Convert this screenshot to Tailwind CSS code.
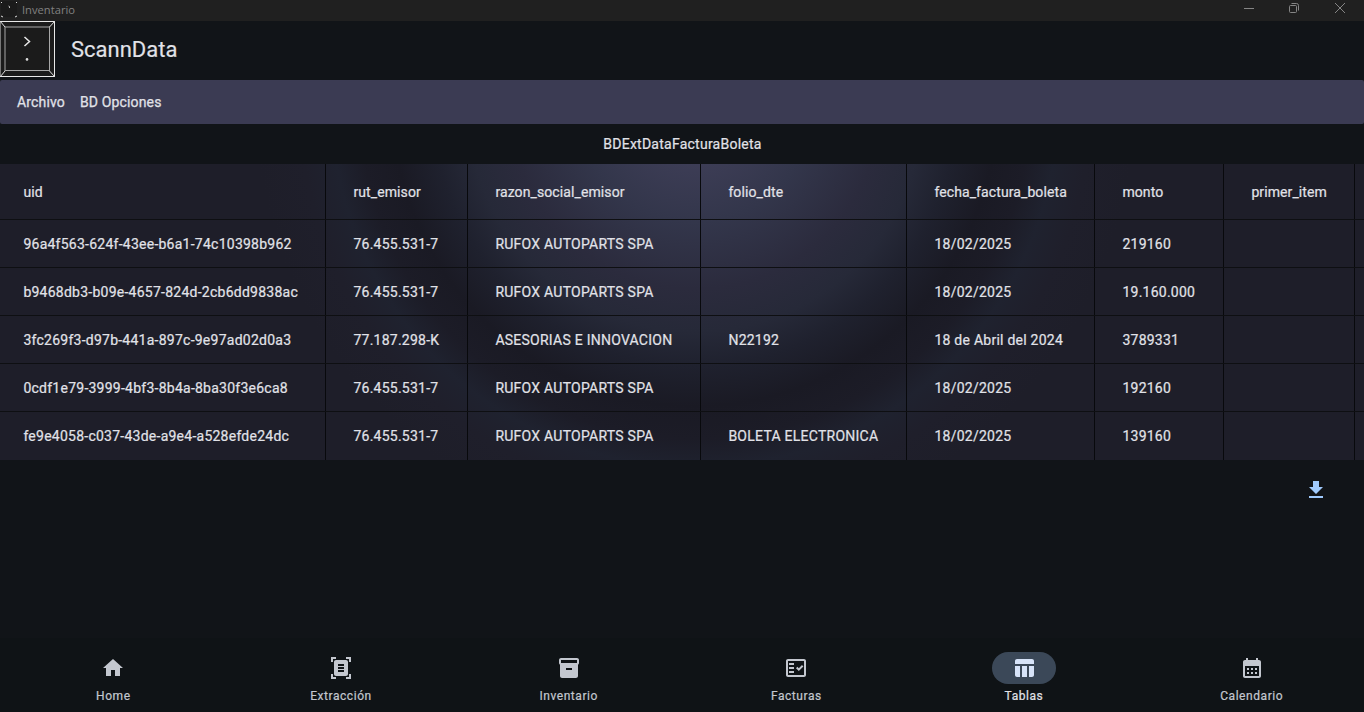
<!DOCTYPE html>
<html lang="es">
<head>
<meta charset="utf-8">
<title>Inventario</title>
<script src="https://cdn.jsdelivr.net/npm/@tailwindcss/browser@4"></script>
</head>
<body class="w-[1364px] h-[712px] overflow-hidden flex flex-col bg-[#111418] text-[#e1e2e8] font-['Roboto',sans-serif] text-sm">
<header class="h-[21px] shrink-0 bg-[#202020] flex items-center text-[#808080]">
  <svg class="w-[18px] h-[18px] mb-1" viewBox="0 0 18 18" fill="none"><path d="M1 1h16v16H1z" fill="#1b1b1b"/><path d="M1 3l1-1M16 2l1 1M1 16l2 1M15 17l2-1" stroke="#ddd"/><path d="M8.500 6l1.500 1-1 1" stroke="#ddd" stroke-width=".8"/></svg>
  <span class="ml-1 leading-5 font-['Open_Sans',sans-serif] text-[11.2px] -mt-0.5">Inventario</span>
  <svg class="ml-auto w-[129px] h-[21px]" viewBox="0 0 129 21" fill="none" stroke="#858585"><path d="M9 8.500h10"/><rect x="54.500" y="5.500" width="7" height="7" rx="1"/><path d="M56.500 3.500h5q2 0 2 2v5"/><path d="M100 3l10 10M110 3l-10 10"/></svg>
</header>
<div class="h-[59px] shrink-0 flex items-start">
  <svg class="w-[55px] h-[56px]" viewBox="0 0 55 56" fill="none"><path d="M0 0h55v56H0z" fill="#1b1b1b"/><path d="M0 .5h54.500v55H0" stroke="#e8e8e8"/><path d="M.5 1v54" stroke="#777"/><rect x="5" y="6" width="44.500" height="43.500" stroke="#a8a8a8"/><path d="M0 0l5 6M55 0l-5.500 6M0 56l5-6M55 56l-5.500-6" stroke="#e0e0e0"/><path d="M24.500 16l5 4.500-5 4.500" stroke="#e8e8e8" stroke-width="1.500"/><circle cx="27" cy="38.400" r="1.300" fill="#ddd"/></svg>
  <h1 class="ml-4 mt-[15px] text-[22px] leading-7 [-webkit-text-stroke:0.15px]">ScannData</h1>
</div>
<nav class="h-11 shrink-0 rounded-[2px] bg-[#3b3b53] flex items-center gap-[15px] px-[17px] tracking-[0.15px] [-webkit-text-stroke:0.25px]"><span>Archivo</span><span>BD Opciones</span></nav>
<h2 class="h-10 shrink-0 flex items-center justify-center tracking-[0.25px] pl-px [-webkit-text-stroke:0.2px]">BDExtDataFacturaBoleta</h2>
<main class="h-[296px] shrink-0 bg-[radial-gradient(circle_at_695px_-60px,#3e3e57_50px,#33364b_118px,#2b2b3d_185px,#262938_228px,#1f212e_262px,#1a1a24_302px,#1c1c27_335px,#1f222f_363px,#1f1f2b_395px,#1e1e29_440px)]">
  <table class="table-fixed w-[1364px] border-collapse text-left [-webkit-text-stroke:0.2px]">
    <colgroup><col class="w-[326px]"><col class="w-[142px]"><col class="w-[233px]"><col class="w-[206px]"><col class="w-[188px]"><col class="w-[129px]"><col class="w-[131px]"><col></colgroup>
    <tbody id="rows"></tbody>
  </table>
</main>
<section class="flex-1 flex justify-end pr-[36.5px] pt-[18px]">
  <svg class="size-6" viewBox="0 0 24 24" fill="#a0cafd"><path d="M19 9h-4V3H9v6H5l7 7 7-7zM5 18v2h14v-2H5z"/></svg>
</section>
<footer class="h-[74px] shrink-0 grid grid-cols-6 bg-[#0f1316] text-xs tracking-[0.56px] text-[#c3c7cf] fill-[#c3c7cf] pt-3.5 -ml-[0.5px] -mr-[1.5px] [-webkit-text-stroke:0.2px]">
  <div class="flex flex-col items-center"><span class="h-8 w-16 flex items-center justify-center"><svg class="size-6 stroke-0" viewBox="0 0 24 24"><path d="M10 20v-6h4v6h5v-8h3L12 3 2 12h3v8z"/></svg></span><span class="mt-1">Home</span></div>
  <div class="flex flex-col items-center"><span class="h-8 w-16 flex items-center justify-center"><svg class="size-6" viewBox="0 0 24 24"><path fill-rule="evenodd" d="M7 3H4v3H2V1h5v2zM22 6V1h-5v2h3v3h2zM7 21H4v-3H2v5h5v-2zM20 18v3h-3v2h5v-5h-2zM19 18c0 1.100-.9 2-2 2H7c-1.100 0-2-.9-2-2V6c0-1.100.9-2 2-2h10c1.100 0 2 .9 2 2v12zM15 8H9v2h6V8zM15 11H9v2h6v-2zM15 14H9v2h6v-2z"/></svg></span><span class="mt-1">Extracción</span></div>
  <div class="flex flex-col items-center"><span class="h-8 w-16 flex items-center justify-center"><svg class="size-6" viewBox="0 0 24 24"><path d="M20 2H4c-1 0-2 .9-2 2v3.010c0 .72.43 1.340 1 1.690V20c0 1.100 1.100 2 2 2h14c.9 0 2-.9 2-2V8.700c.57-.35 1-.97 1-1.690V4c0-1.100-1-2-2-2zm-5 12H9v-2h6v2zm5-7H4V4l16-.02V7z"/></svg></span><span class="mt-1">Inventario</span></div>
  <div class="flex flex-col items-center"><span class="h-8 w-16 flex items-center justify-center"><svg class="size-6" viewBox="0 0 24 24"><path fill-rule="evenodd" d="M20 3H4c-1.100 0-2 .9-2 2v14c0 1.100.9 2 2 2h16c1.100 0 2-.9 2-2V5c0-1.100-.9-2-2-2zm0 16H4V5h16v14z"/><path d="M19.410 10.420 17.990 9l-3.170 3.170-1.410-1.420L12 12.160 14.820 15zM5 7h5v2H5zM5 11h5v2H5zM5 15h5v2H5z"/></svg></span><span class="mt-1">Facturas</span></div>
  <div class="flex flex-col items-center text-[#e1e2e8]"><span class="h-8 w-16 rounded-full bg-[#3b4858] flex items-center justify-center"><svg class="size-6 fill-[#d7e3f8]" viewBox="0 0 24 24"><path d="M10 10.020h5V21h-5zM17 21h3c1.100 0 2-.9 2-2v-9h-5v11zm3-18H5c-1.100 0-2 .9-2 2v3h19V5c0-1.100-.9-2-2-2zM3 19c0 1.100.9 2 2 2h3V10H3v9z"/></svg></span><span class="mt-1">Tablas</span></div>
  <div class="flex flex-col items-center"><span class="h-8 w-16 flex items-center justify-center"><svg class="size-6" viewBox="0 0 24 24"><path d="M19 4h-1V2h-2v2H8V2H6v2H5c-1.110 0-1.990.9-1.990 2L3 20c0 1.100.89 2 2 2h14c1.100 0 2-.9 2-2V6c0-1.100-.9-2-2-2zm0 16H5V10h14v10zM9 14H7v-2h2v2zm4 0h-2v-2h2v2zm4 0h-2v-2h2v2zm-8 4H7v-2h2v2zm4 0h-2v-2h2v2zm4 0h-2v-2h2v2z"/></svg></span><span class="mt-1">Calendario</span></div>
</footer>
<script>
const rows = [
  ['uid','rut_emisor','razon_social_emisor','folio_dte','fecha_factura_boleta','monto','primer_item',''],
  ['96a4f563-624f-43ee-b6a1-74c10398b962','76.455.531-7','RUFOX AUTOPARTS SPA','','18/02/2025','219160','',''],
  ['b9468db3-b09e-4657-824d-2cb6dd9838ac','76.455.531-7','RUFOX AUTOPARTS SPA','','18/02/2025','19.160.000','',''],
  ['3fc269f3-d97b-441a-897c-9e97ad02d0a3','77.187.298-K','ASESORIAS E INNOVACION','N22192','18 de Abril del 2024','3789331','',''],
  ['0cdf1e79-3999-4bf3-8b4a-8ba30f3e6ca8','76.455.531-7','RUFOX AUTOPARTS SPA','','18/02/2025','192160','',''],
  ['fe9e4058-c037-43de-a9e4-a528efde24dc','76.455.531-7','RUFOX AUTOPARTS SPA','BOLETA ELECTRONICA','18/02/2025','139160','','']
];
document.getElementById('rows').innerHTML = rows.map((r, i) =>
  `<tr class="${i ? 'h-12' : 'h-14'}">` + r.map((c, j) =>
    `<td class="p-0 whitespace-nowrap ${i ? 'tracking-[0.25px]' : 'tracking-[0.1px]'} ${j ? 'pl-[27px]' : 'pl-[23px]'} ${j < 7 ? 'shadow-[inset_-1px_0_#08090c]' : ''}"><div class="flex items-center -ml-[27px] pl-[27.4px] ${i ? 'h-12' : 'h-14'} ${i < 5 ? 'shadow-[inset_0_-1px_#0e0f12]' : ''}">${c}</div></td>`).join('') + '</tr>').join('');
</script>
</body>
</html>
